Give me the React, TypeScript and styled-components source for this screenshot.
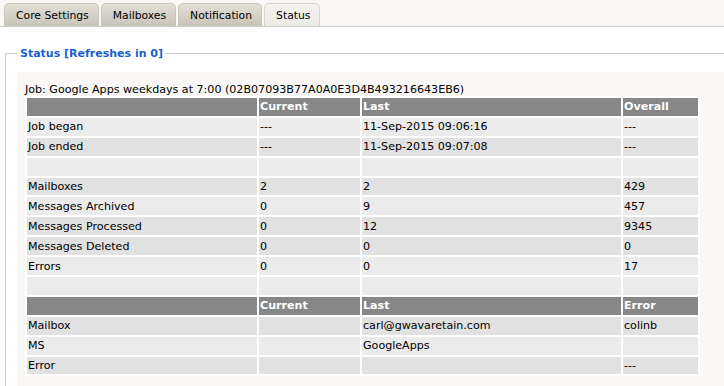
import * as React from 'react';
import styled, { createGlobalStyle } from 'styled-components';

const GlobalStyle = createGlobalStyle`
    html, body {
        margin: 0;
        padding: 0;
        background: #ffffff;
        font-family: "DejaVu Sans", Verdana, sans-serif;
        color: #000;
        overflow: hidden;
    }
`

// *** Tabs ***
const TabBar = styled.div`
    display: flex;
    align-items: flex-end;
    gap: 2px;
    height: 27px;
    padding-left: 4px;
    background-color: #f9f8f6;
    border-bottom: 1px solid #cccccc;
    box-sizing: border-box;
`
const Tab = styled.div<{ $active?: boolean }>`
    height: 23px;
    padding: 0 9px 0 11px;
    display: flex;
    align-items: center;
    font-size: 10.8px;
    color: #000;
    border: 1px solid ${p => p.$active ? '#d8d6d0' : '#c9c6bc'};
    border-bottom: none;
    border-radius: 5px 5px 0 0;
    background: ${p => p.$active
        ? 'linear-gradient(#f4f3ef, #ecebe6)'
        : 'linear-gradient(#e2dfd7, #c8c4b9)'};
    box-sizing: border-box;
`

// *** Fieldset ***
const Fieldset = styled.fieldset`
    margin: 20px -10px 0 5px;
    padding: 12px 12px 0 11px;
    border: 1px solid #cccccc;
    border-bottom: none;
    border-right: none;
`
const Legend = styled.legend`
    padding: 0 2px;
    margin-left: 1px;
    font-size: 11px;
    font-weight: bold;
    color: #1a5fd0;
`
const Panel = styled.div`
    background-color: #f9f8f6;
    padding: 11px 24px 20px 8px;
    min-height: 300px;
`
const JobLine = styled.div`
    font-size: 11.1px;
    line-height: 13px;
`

// *** Table ***
const Table = styled.table`
    width: 675px;
    border-spacing: 2px;
    border-collapse: separate;
    font-size: 11.1px;
    background: #ffffff;
    table-layout: fixed;
`
const HeadCell = styled.th<{ $w?: number }>`
    background-color: #878787;
    color: #ffffff;
    font-weight: bold;
    text-align: left;
    height: 17.9px;
    padding: 0 1px;
    width: ${p => p.$w ? p.$w + 'px' : 'auto'};
`
const Row = styled.tr<{ $dark?: boolean }>`
    background-color: ${p => p.$dark ? '#e1e1e1' : '#ebebeb'};
`
const Cell = styled.td`
    height: 17.9px;
    padding: 0 1px;
    white-space: nowrap;
    overflow: hidden;
`

interface RowData {
    cells: string[],
    dark: boolean
}

const statsRows: RowData[] = [
    { cells: ['Job began', '---', '11-Sep-2015 09:06:16', '---'], dark: false },
    { cells: ['Job ended', '---', '11-Sep-2015 09:07:08', '---'], dark: true },
    { cells: ['', '', '', ''], dark: false },
    { cells: ['Mailboxes', '2', '2', '429'], dark: true },
    { cells: ['Messages Archived', '0', '9', '457'], dark: false },
    { cells: ['Messages Processed', '0', '12', '9345'], dark: true },
    { cells: ['Messages Deleted', '0', '0', '0'], dark: true },
    { cells: ['Errors', '0', '0', '17'], dark: false },
    { cells: ['', '', '', ''], dark: false },
]

const detailRows: RowData[] = [
    { cells: ['Mailbox', '', 'carl@gwavaretain.com', 'colinb'], dark: true },
    { cells: ['MS', '', 'GoogleApps', ''], dark: false },
    { cells: ['Error', '', '', '---'], dark: true },
]

const widths = [228, 99, 257];

const renderRows = (rows: RowData[]) => rows.map((row, index) => (
    <Row key={index} $dark={row.dark}>
        {row.cells.map((c, i) => <Cell key={i}>{c}</Cell>)}
    </Row>
));

export default function App() {
    return (
        <>
            <GlobalStyle />
            <TabBar>
                <Tab>Core Settings</Tab>
                <Tab>Mailboxes</Tab>
                <Tab>Notification</Tab>
                <Tab $active>Status</Tab>
            </TabBar>
            <Fieldset>
                <Legend>Status [Refreshes in 0]</Legend>
                <Panel>
                    <JobLine>Job: Google Apps weekdays at 7:00 (02B07093B77A0A0E3D4B493216643EB6)</JobLine>
                    <Table>
                        <thead>
                            <tr>
                                <HeadCell $w={widths[0]}></HeadCell>
                                <HeadCell $w={widths[1]}>Current</HeadCell>
                                <HeadCell $w={widths[2]}>Last</HeadCell>
                                <HeadCell>Overall</HeadCell>
                            </tr>
                        </thead>
                        <tbody>
                            {renderRows(statsRows)}
                            <tr>
                                <HeadCell></HeadCell>
                                <HeadCell>Current</HeadCell>
                                <HeadCell>Last</HeadCell>
                                <HeadCell>Error</HeadCell>
                            </tr>
                            {renderRows(detailRows)}
                        </tbody>
                    </Table>
                </Panel>
            </Fieldset>
        </>
    )
}
